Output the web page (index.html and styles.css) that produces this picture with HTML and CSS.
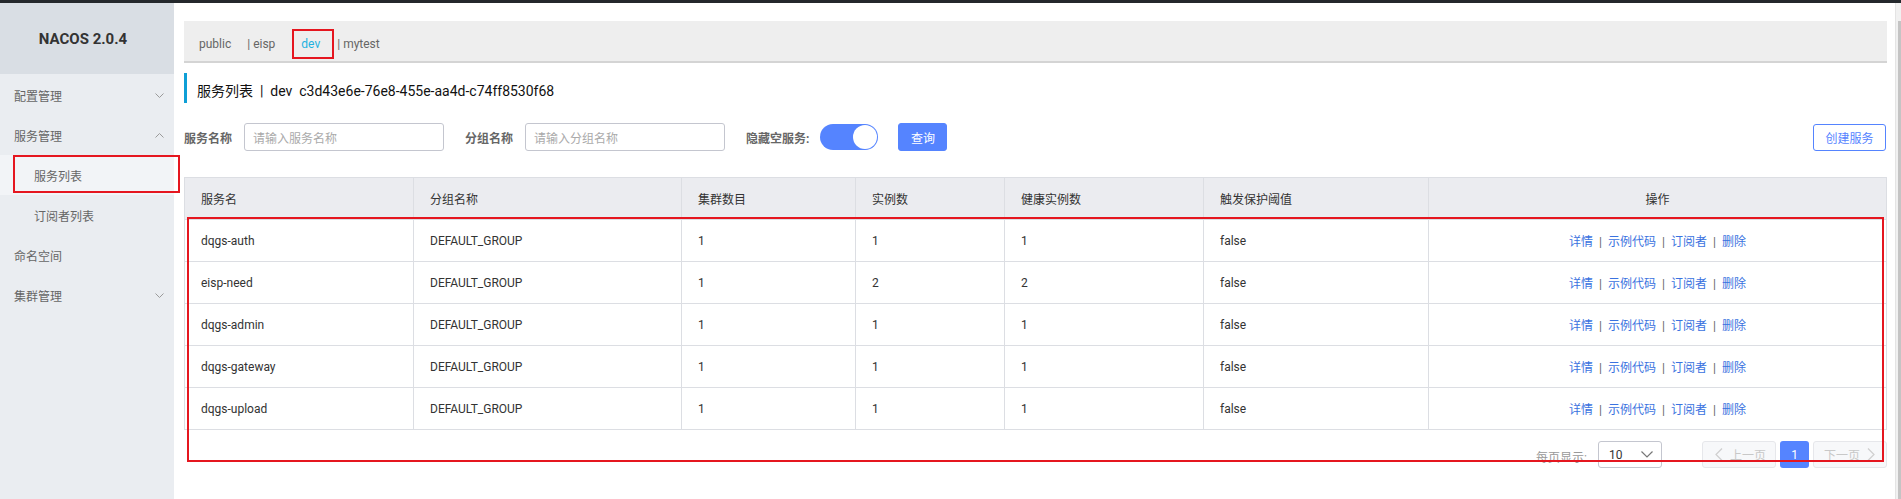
FILE: index.html
```html
<!DOCTYPE html>
<html lang="zh-CN">
<head>
<meta charset="utf-8">
<title>Nacos</title>
<link rel="stylesheet" href="styles.css">
</head>
<body>
<div class="topbar"></div>
<div class="layout">
  <aside class="sidebar">
    <div class="logo">NACOS 2.0.4</div>
    <nav class="menu">
      <div class="menu-item"><span>配置管理</span><svg class="chev" width="9" height="5" viewBox="0 0 9 5"><polyline points="0.5,0.5 4.5,4.5 8.5,0.5"/></svg></div>
      <div class="menu-item"><span>服务管理</span><svg class="chev" width="9" height="5" viewBox="0 0 9 5"><polyline points="0.5,4.5 4.5,0.5 8.5,4.5"/></svg></div>
      <div class="menu-item sub active"><span>服务列表</span></div>
      <div class="menu-item sub"><span>订阅者列表</span></div>
      <div class="menu-item"><span>命名空间</span></div>
      <div class="menu-item"><span>集群管理</span><svg class="chev" width="9" height="5" viewBox="0 0 9 5"><polyline points="0.5,0.5 4.5,4.5 8.5,0.5"/></svg></div>
    </nav>
  </aside>
  <div class="annot annot-menu"></div>

  <main class="main">
    <div class="ns-bar">
      <span class="ns ns-public">public</span>
      <span class="ns ns-eisp">| eisp</span>
      <span class="ns ns-dev">dev</span>
      <span class="ns">| mytest</span>
    </div>

    <div class="title">服务列表&nbsp;&nbsp;|&nbsp;&nbsp;dev&nbsp;&nbsp;c3d43e6e-76e8-455e-aa4d-c74ff8530f68</div>

    <div class="search">
      <span class="label">服务名称</span>
      <div class="input">请输入服务名称</div>
      <span class="label">分组名称</span>
      <div class="input">请输入分组名称</div>
      <span class="label label-hide">隐藏空服务:</span>
      <div class="switch"><div class="knob"></div></div>
      <button class="btn-primary">查询</button>
      <button class="btn-outline">创建服务</button>
    </div>

    <table class="table">
      <colgroup>
        <col class="w1"><col class="w2"><col class="w3"><col class="w4"><col class="w5"><col class="w6"><col>
      </colgroup>
      <thead>
        <tr><th>服务名</th><th>分组名称</th><th>集群数目</th><th>实例数</th><th>健康实例数</th><th>触发保护阈值</th><th class="center">操作</th></tr>
      </thead>
      <tbody>
        <tr><td>dqgs-auth</td><td>DEFAULT_GROUP</td><td>1</td><td>1</td><td>1</td><td>false</td><td class="ops"><a>详情</a><span class="sep">|</span><a>示例代码</a><span class="sep">|</span><a>订阅者</a><span class="sep">|</span><a>删除</a></td></tr>
        <tr><td>eisp-need</td><td>DEFAULT_GROUP</td><td>1</td><td>2</td><td>2</td><td>false</td><td class="ops"><a>详情</a><span class="sep">|</span><a>示例代码</a><span class="sep">|</span><a>订阅者</a><span class="sep">|</span><a>删除</a></td></tr>
        <tr><td>dqgs-admin</td><td>DEFAULT_GROUP</td><td>1</td><td>1</td><td>1</td><td>false</td><td class="ops"><a>详情</a><span class="sep">|</span><a>示例代码</a><span class="sep">|</span><a>订阅者</a><span class="sep">|</span><a>删除</a></td></tr>
        <tr><td>dqgs-gateway</td><td>DEFAULT_GROUP</td><td>1</td><td>1</td><td>1</td><td>false</td><td class="ops"><a>详情</a><span class="sep">|</span><a>示例代码</a><span class="sep">|</span><a>订阅者</a><span class="sep">|</span><a>删除</a></td></tr>
        <tr><td>dqgs-upload</td><td>DEFAULT_GROUP</td><td>1</td><td>1</td><td>1</td><td>false</td><td class="ops"><a>详情</a><span class="sep">|</span><a>示例代码</a><span class="sep">|</span><a>订阅者</a><span class="sep">|</span><a>删除</a></td></tr>
      </tbody>
    </table>

    <div class="pager">
      <span class="pg-label">每页显示:</span>
      <div class="select"><span>10</span><svg width="12" height="7" viewBox="0 0 12 7"><polyline points="0.5,0.5 6,6 11.5,0.5"/></svg></div>
      <div class="pg-btn pg-prev"><svg width="8" height="13" viewBox="0 0 8 13"><polyline points="7,0.5 1,6.5 7,12.5"/></svg><span>上一页</span></div>
      <div class="pg-cur">1</div>
      <div class="pg-btn pg-next"><span>下一页</span><svg width="8" height="13" viewBox="0 0 8 13"><polyline points="1,0.5 7,6.5 1,12.5"/></svg></div>
    </div>

    <div class="annot annot-dev"></div>
    <div class="annot annot-table"></div>
  </main>

  <div class="scrollbar"><div class="thumb"></div></div>
</div>
</body>
</html>
```

FILE: styles.css
```css
* { box-sizing: border-box; }
html, body { margin: 0; padding: 0; }
body {
  font-family: Roboto, "Noto Sans CJK SC", sans-serif;
  font-size: 12px;
  color: #333;
  background: #fff;
  overflow: hidden;
  width: 1901px;
  height: 499px;
}
.topbar { height: 3px; background: #24282c; }
.layout { display: flex; height: 496px; position: relative; }

/* sidebar */
.sidebar { width: 174px; flex: none; background: #eaedf1; }
.logo {
  height: 71px;
  background: #d9dee4;
  display: flex; align-items: center; justify-content: center;
  font-weight: bold; font-size: 15px; color: #333;
  padding-right: 8px;
}
.menu { padding-top: 1px; }
.menu-item {
  height: 40px;
  display: flex; align-items: center; justify-content: space-between;
  padding: 0 10px 0 14px;
  color: #666;
}
.menu-item.sub { padding-left: 34px; }
.menu-item.active { background: #f2f4f7; }
.chev { fill: none; stroke: #9a9a9a; stroke-width: 1; }

/* main */
.main { flex: 1; min-width: 0; position: relative; padding: 18px 8px 0 10px; }
.scrollbar { width: 6px; flex: none; background: #f1f1f1; padding-top: 18px; display: flex; justify-content: flex-end; border-left: 1px solid #e4e4e4; }
.thumb { width: 3px; height: 100%; background: #c4c4c4; }

.ns-bar {
  height: 42px;
  background: #eeeeee;
  border-bottom: 2px solid #d4d4d4;
  display: flex; align-items: center;
  padding: 5px 0 0 15px;
  color: #666;
  font-size: 12px;
}
.ns-public { margin-right: 16px; }
.ns-eisp { margin-right: 26px; }
.ns-dev { color: #1fb2e0; margin-right: 17px; }

.title {
  margin-top: 10px;
  height: 30px;
  border-left: 3px solid #0f9fd6;
  padding: 4px 0 0 10px;
  display: flex; align-items: center;
  font-size: 14px; color: #111;
}

.search { margin-top: 20px; height: 28px; display: flex; align-items: center; }
.label { font-weight: bold; color: #666; margin-right: 12px; }
.label-hide { margin-right: 11px; }
.input {
  width: 200px; height: 28px;
  border: 1px solid #c4c6cf; border-radius: 3px;
  padding-left: 8px; color: #aaa;
  display: flex; align-items: center;
  margin-right: 21px;
}
.switch {
  width: 58px; height: 26px; border-radius: 13px;
  background: #5584ff;
  display: flex; align-items: center; justify-content: flex-end;
  padding-right: 1px;
  margin-right: 20px;
}
.knob { width: 24px; height: 24px; border-radius: 50%; background: #fff; }
.btn-primary, .btn-outline {
  font-family: inherit; font-size: 12px;
  border-radius: 3px; cursor: pointer; padding: 0;
}
.btn-primary { width: 49px; height: 28px; background: #5584ff; border: 1px solid #5584ff; color: #fff; }
.btn-outline { margin-left: auto; margin-right: 1px; width: 73px; height: 27px; background: #fff; border: 1px solid #5584ff; color: #5584ff; }

/* table */
.table { margin-top: 26px; width: 100%; border-collapse: collapse; table-layout: fixed; }
.w1 { width: 229px; }
.w2 { width: 268px; }
.w3 { width: 174px; }
.w4 { width: 149px; }
.w5 { width: 199px; }
.w6 { width: 225px; }
.table tr { height: 42px; }
.table th, .table td {
  border: 1px solid #dcdee3;
  padding: 0 16px;
  text-align: left;
  font-weight: normal;
  color: #333;
  white-space: nowrap;
}
.table th { background: #ebecf0; }
.table th.center { text-align: center; }
.table td.ops { text-align: center; color: #3a72e0; }
.ops a { color: #3a72e0; }
.ops .sep { color: #666; margin: 0 6px; }

/* pager */
.pager { margin-top: 11px; height: 27px; display: flex; align-items: center; justify-content: flex-end; }
.pg-label { color: #999; margin-right: 11px; padding-top: 4px; }
.select {
  width: 64px; height: 27px;
  border: 1px solid #c4c6cf; border-radius: 3px;
  display: flex; align-items: center; justify-content: space-between;
  padding: 0 8px 0 10px;
  color: #333;
  margin-right: 40px;
}
.select svg { fill: none; stroke: #777; stroke-width: 1.2; }
.pg-btn {
  width: 74px; height: 27px;
  border: 1px solid #e6e7eb; border-radius: 3px;
  background: #f7f8fa; color: #c8c8c8;
  display: flex; align-items: center; gap: 7px;
}
.pg-btn svg { fill: none; stroke: #cfcfcf; stroke-width: 1.2; }
.pg-prev { padding-left: 12px; }
.pg-next { padding-left: 10px; }
.pg-cur {
  width: 29px; height: 27px; margin: 0 4px;
  background: #5584ff; color: #fff; border-radius: 3px;
  display: flex; align-items: center; justify-content: center;
}

/* red annotation boxes drawn over the screenshot */
.annot { position: absolute; border: 2px solid #e5161f; pointer-events: none; }
.annot-menu { left: 13px; top: 152px; width: 167px; height: 38px; }
.annot-dev { left: 118px; top: 26px; width: 42px; height: 30px; }
.annot-table { left: 13px; top: 214px; width: 1697px; height: 245px; }
```
